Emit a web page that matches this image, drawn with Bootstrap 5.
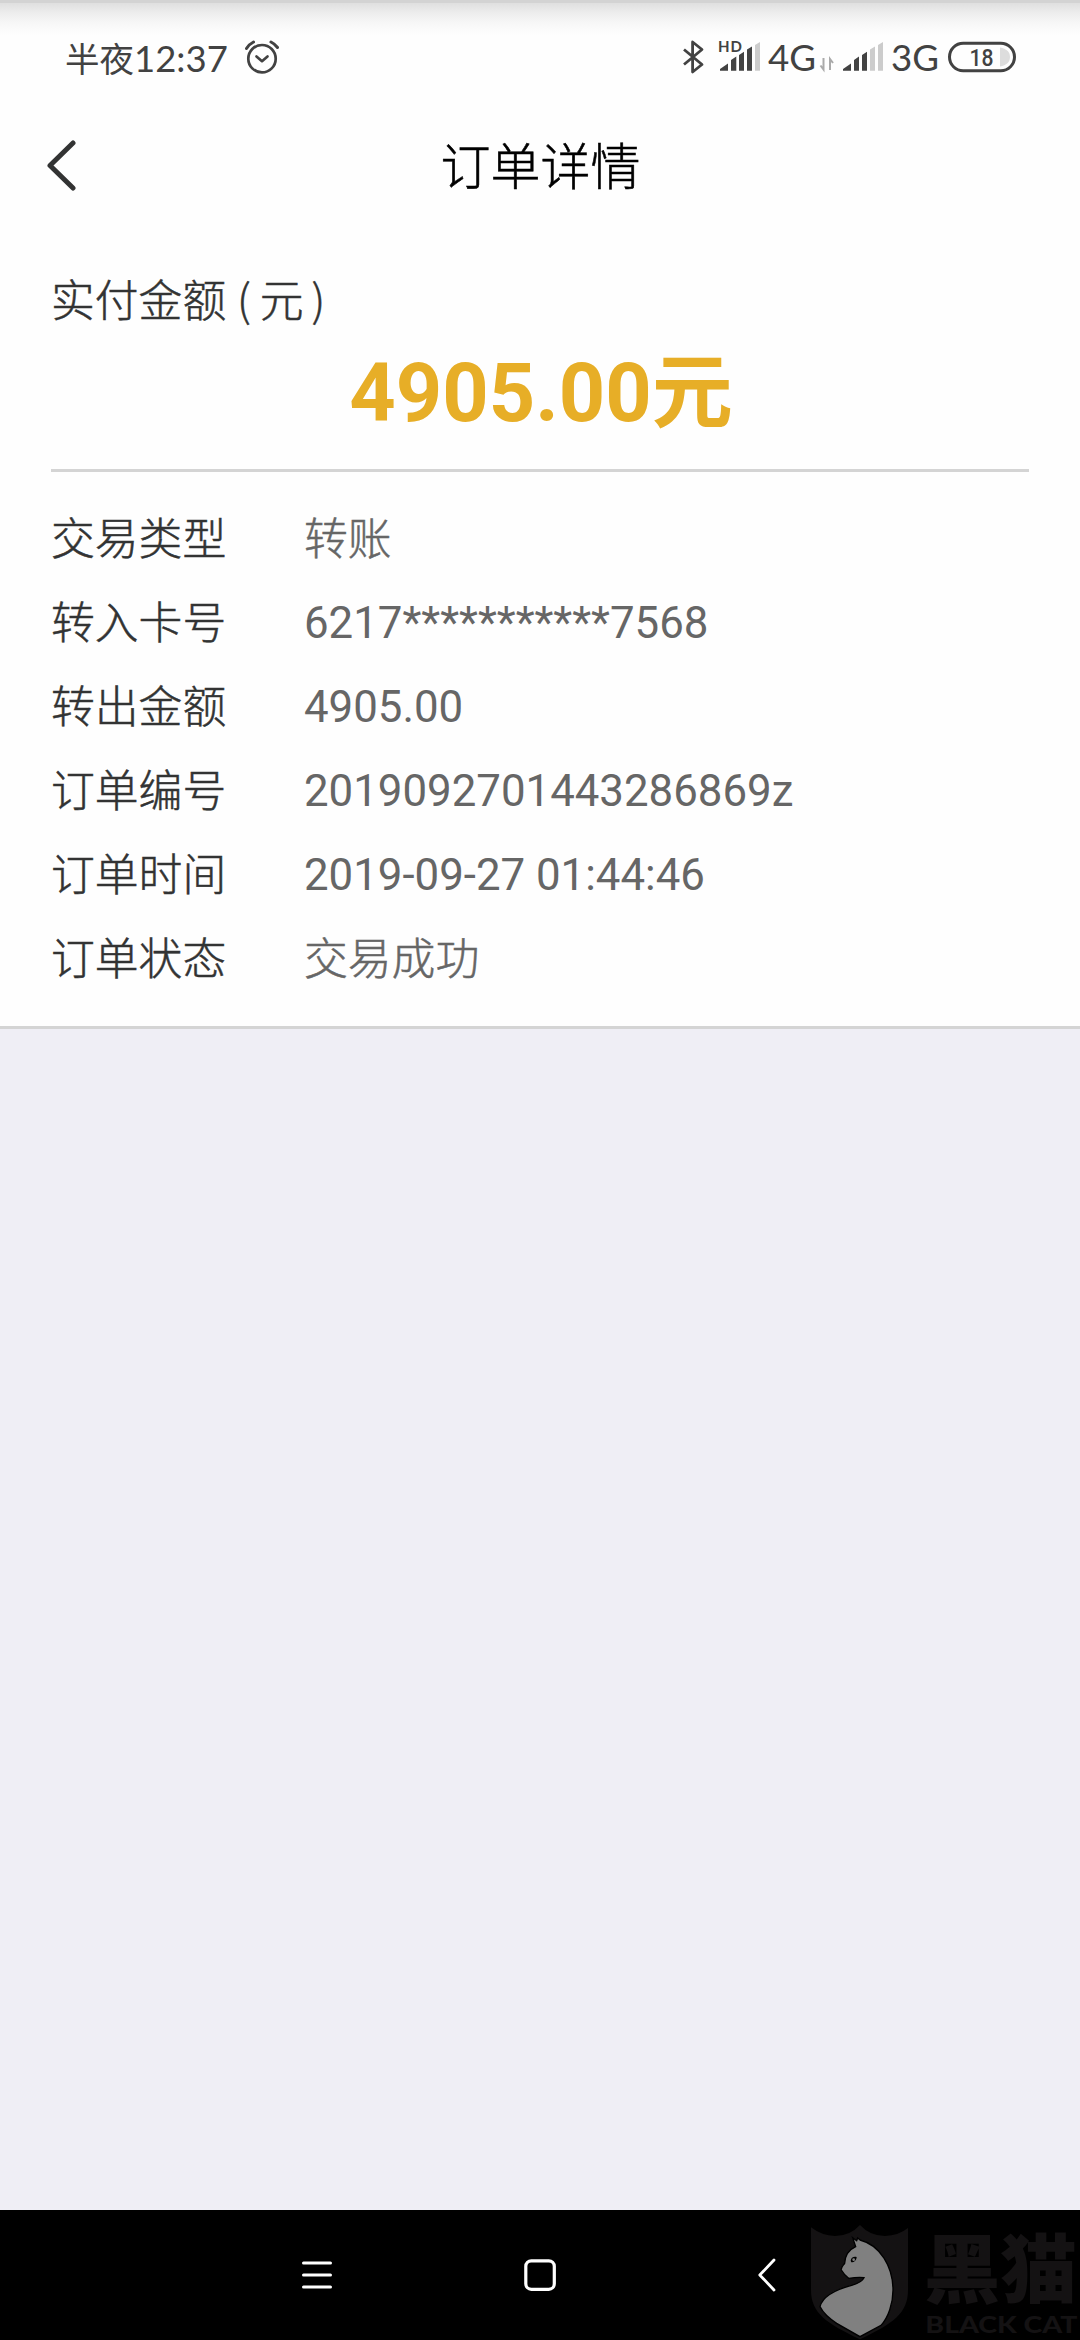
<!DOCTYPE html>
<html lang="zh-CN">
<head>
<meta charset="utf-8">
<meta name="viewport" content="width=device-width, initial-scale=1">
<title>订单详情</title>
<link href="https://cdn.jsdelivr.net/npm/bootstrap@5.3.0/dist/css/bootstrap.min.css" rel="stylesheet">
<style>
  html, body { height: 2340px; overflow: hidden; }
  body { font-family: Roboto, "Noto Sans CJK SC", sans-serif; background: #efeef5; color: #323333; }
  svg { display: block; flex: none; }
  .sheet { background: #fefefe; border-bottom: 3px solid #d4d4d4; height: 1029px; }
  .status-bar { height: 116px; padding: 0 60px 0 65px; color: #424242;
    background: linear-gradient(#d3d3d3 0 3px, #dfdfdf 3px, #ececec 12px, #f7f7f7 23px, #fefefe 35px); }
  .clock-text { font-family: Lato, "Noto Sans CJK SC", sans-serif; font-size: 36.5px; line-height: 40px; white-space: nowrap; width: 180px; }
  .clock-cjk { font-size: 34.5px; }
  .title-bar { height: 98px; padding: 0 76px 0 46px; }
  .title-text { font-size: 50px; line-height: 60px; color: #000; padding-bottom: 4px; }
  .cjk-light { font-family: "Noto Sans CJK SC Light", "Noto Sans CJK SC", sans-serif; font-weight: 300; -webkit-text-stroke: .5px currentColor; }
  .paid { padding: 0 51px; }
  .paid-label { font-size: 43.8px; line-height: 84px; margin-top: 42px; margin-bottom: 4px; }
  .paren-open { margin: 0 9px 0 1px; }
  .paren-close { margin-left: 8px; }
  .paid-amount { font-size: 81px; line-height: 100px; color: #e7ae27; margin-bottom: 25px; padding-left: 2px; }
  .rule-line { height: 3px; background: #d4d4d4; }
  .detail-list { padding: 22px 51px 0; font-size: 43.8px; line-height: 84px; }
  .detail-row { height: 84px; }
  .detail-key { width: 253px; }
  .detail-val { color: #666; white-space: nowrap; }
  .latin-val { padding-top: 3px; }
  .android-nav { height: 130px; background: #000; padding-left: 302px; }
  .home-icon { margin-left: 190px; }
  .back-icon { margin-left: 200px; }
  .brand-stamp { right: 0; bottom: 0; }
</style>
</head>
<body class="d-flex flex-column">
<main class="sheet d-flex flex-column flex-shrink-0">
  <header class="status-bar d-flex align-items-center justify-content-between">
    <div class="d-flex align-items-center">
      <div class="clock-text"><span class="clock-cjk">半夜</span>12:37</div>
      <svg width="36" height="36" viewBox="0 0 36 36" fill="none" stroke="#424242" stroke-width="2.7" stroke-linecap="round" stroke-linejoin="round">
        <circle cx="17" cy="18.700" r="13.700"/><path d="M11.500 16.500l5.500 4.700 5.500-4.700"/><path stroke-width="3" d="M1.500 8.500C3.300 5.500 5.500 3.500 8.500 2M32.500 7.500C30.500 4.800 28.500 3.200 26 2"/>
      </svg>
    </div>
    <svg width="344" height="50" viewBox="676 33 344 50">
      <path d="M684 49.500L702 64.500L692.600 72V42L702 49.500L684 64.500" fill="none" stroke="#424242" stroke-width="2.800" stroke-linejoin="round"/>
      <g fill="#424242" font-family="Lato, sans-serif">
        <text x="718" y="52" font-weight="700" font-size="15" textLength="24">HD</text>
        <path d="M720 70.700V69L728 63.500V70.700zM731 70.700V60L736.300 56.500V70.700zM739 70.700V55L744 51.700V70.700zM747 70.700V49.500L752 46.500V70.700z"/>
        <path fill="#ccc" d="M755 70.700V45L760 42V70.700z"/>
        <text x="768" y="71" font-size="36" textLength="48" lengthAdjust="spacingAndGlyphs">4G</text>
        <path d="M820.500 65.500L823.500 69.500V58M830 70V59L833 63" fill="none" stroke="#aaa" stroke-width="2"/>
        <path d="M843 70.700V69L851 63.500V70.700zM854 70.700V60L859 56.500V70.700zM862 70.700V55L867 51.700V70.700z"/>
        <path fill="#ccc" d="M870 70.700V49.500L875 46.500V70.700zM878 70.700V45L883 42V70.700z"/>
        <text x="891" y="71" font-size="36" textLength="48" lengthAdjust="spacingAndGlyphs">3G</text>
        <path fill="#ddd" d="M1000 47.500C1006.500 48.500 1010 52 1010 57S1006.500 65.500 1000 66.500z"/>
        <rect x="949.500" y="43.300" width="65" height="27.500" rx="13.700" fill="none" stroke="#424242" stroke-width="3"/>
        <text x="969.500" y="65.800" font-family="Roboto, sans-serif" font-weight="500" font-size="23.500" textLength="24" lengthAdjust="spacingAndGlyphs">18</text>
      </g>
    </svg>
  </header>
  <header class="title-bar d-flex align-items-center">
    <svg width="31" height="51" viewBox="0 0 31 51" fill="none" stroke="#323333" stroke-width="5" stroke-linecap="round" stroke-linejoin="round"><path d="M27 3L4 25.500L27 48"/></svg>
    <h1 class="title-text cjk-light m-0 flex-grow-1 text-center">订单详情</h1>
  </header>
  <section class="paid">
    <div class="paid-label cjk-light">实付金额 <span class="paren-open">(</span>元<span class="paren-close">)</span></div>
    <div class="paid-amount fw-bold text-center">4905.00元</div>
    <div class="rule-line"></div>
  </section>
  <section class="detail-list">
    <div class="detail-row d-flex"><div class="detail-key cjk-light">交易类型</div><div class="detail-val cjk-light">转账</div></div>
    <div class="detail-row d-flex"><div class="detail-key cjk-light">转入卡号</div><div class="detail-val latin-val">6217***********7568</div></div>
    <div class="detail-row d-flex"><div class="detail-key cjk-light">转出金额</div><div class="detail-val latin-val">4905.00</div></div>
    <div class="detail-row d-flex"><div class="detail-key cjk-light">订单编号</div><div class="detail-val latin-val">2019092701443286869z</div></div>
    <div class="detail-row d-flex"><div class="detail-key cjk-light">订单时间</div><div class="detail-val latin-val">2019-09-27 01:44:46</div></div>
    <div class="detail-row d-flex"><div class="detail-key cjk-light">订单状态</div><div class="detail-val cjk-light">交易成功</div></div>
  </section>
</main>
<footer class="android-nav d-flex align-items-center mt-auto position-relative">
  <svg width="31" height="32" viewBox="0 0 31 32"><path d="M1.500 4H28.500M1.500 16H28.500M1.500 28H28.500" stroke="#fff" stroke-width="3" stroke-linecap="round"/></svg>
  <svg class="home-icon" width="34" height="34" viewBox="0 0 34 34"><rect x="2.800" y="2.800" width="28.500" height="28.500" rx="5.500" fill="none" stroke="#fff" stroke-width="3.200"/></svg>
  <svg class="back-icon" width="20" height="34" viewBox="0 0 20 34"><path d="M17 2L2.800 17L17 32" fill="none" stroke="#fff" stroke-width="2.800" stroke-linecap="round" stroke-linejoin="round"/></svg>
  <svg class="brand-stamp position-absolute" width="270" height="120" viewBox="90 90 810 360">
    <path fill="#141213" d="M93 112Q125 137 165 138Q210 138 240 105Q270 138 315 138Q355 137 384 114V300C384 370 340 400 240 448C140 400 93 370 93 300Z"/>
    <path fill="#808080" stroke="#000" stroke-width="4" d="M218 143L230 152L233 144L240 150C300 165 339 230 339 300C339 340 325 382 303 406L240 440L170 400C145 384 130 370 120 350C130 310 185 294 215 286C235 280 248 272 252 263C235 261 220 263 206 265C198 259 190 250 184 240C182 232 190 226 194 220C195 200 205 180 227 170Z"/>
    <path fill="#000" d="M212 212C213 203 221 198 230 201C230 210 223 217 214 217Z"/><circle cx="221" cy="209" r="4" fill="#808080"/>
    <g fill="#141213">
      <text x="431" y="321" font-family="Noto Sans CJK SC, sans-serif" font-weight="900" font-size="224" textLength="460" lengthAdjust="spacingAndGlyphs">黑猫</text>
      <text x="436" y="428" font-family="Lato, sans-serif" font-weight="900" font-size="67" textLength="456" lengthAdjust="spacingAndGlyphs">BLACK CAT</text>
    </g>
  </svg>
</footer>
<script src="https://cdn.jsdelivr.net/npm/bootstrap@5.3.0/dist/js/bootstrap.bundle.min.js"></script>
</body>
</html>
